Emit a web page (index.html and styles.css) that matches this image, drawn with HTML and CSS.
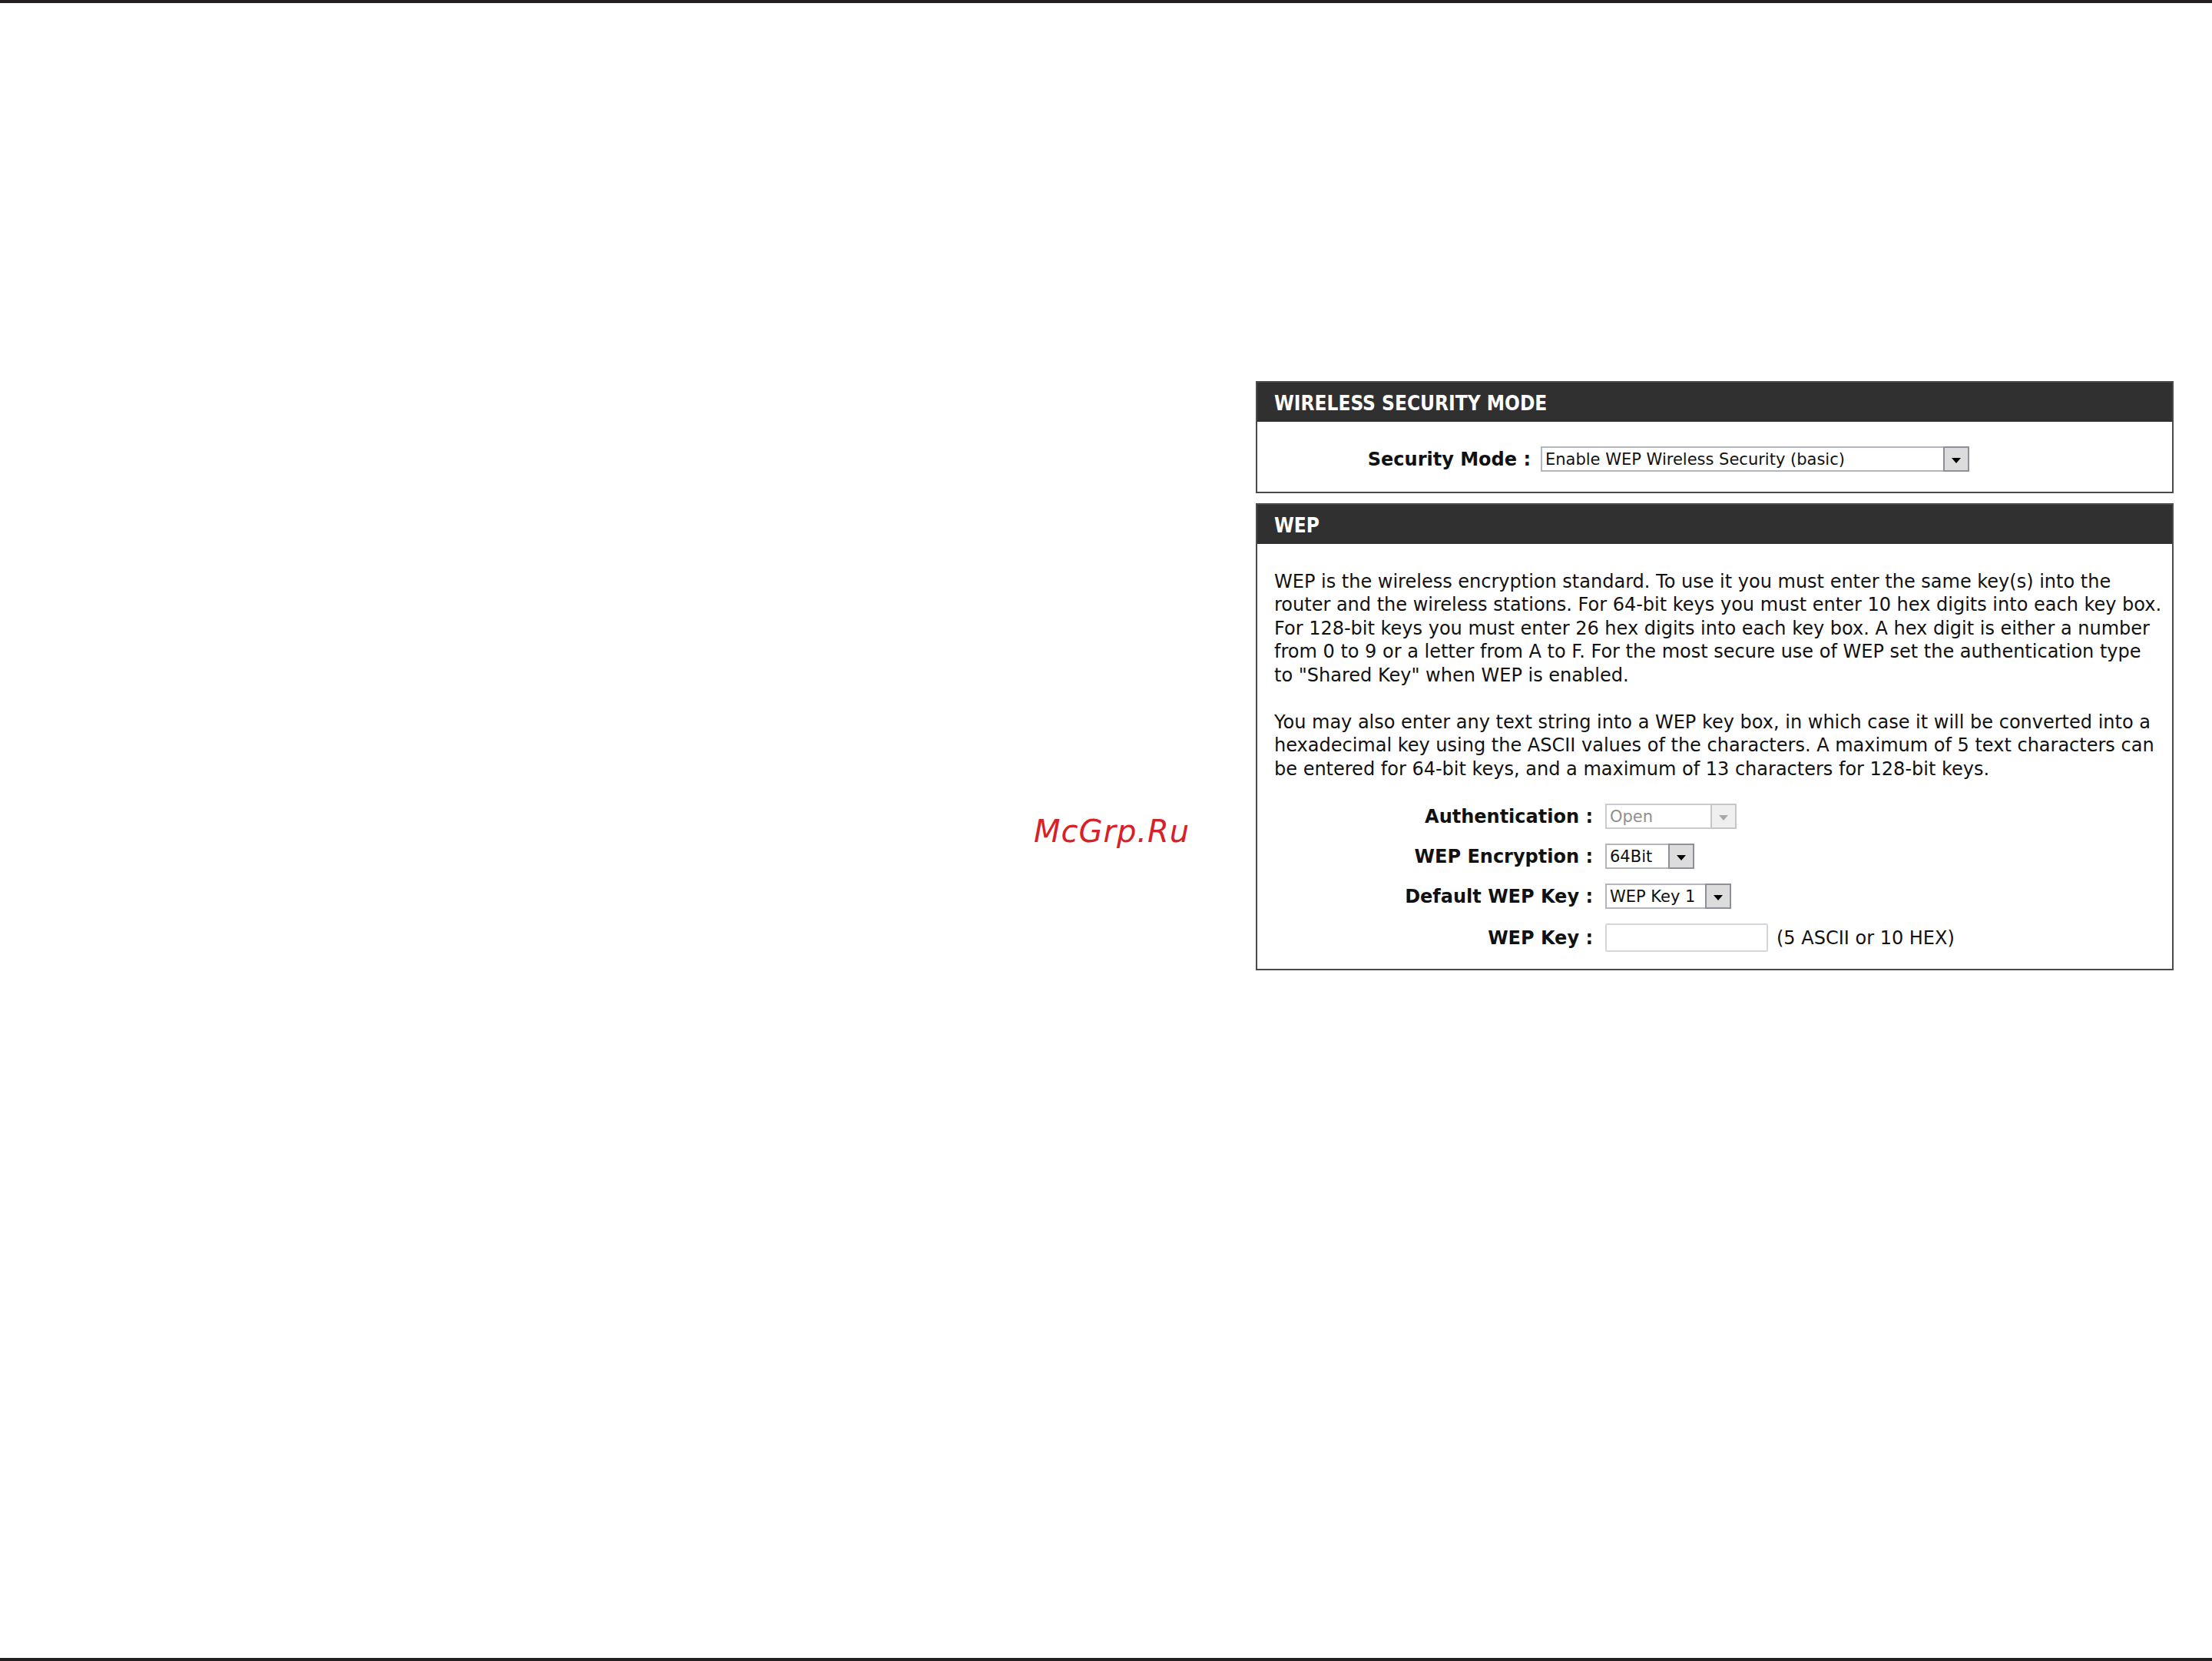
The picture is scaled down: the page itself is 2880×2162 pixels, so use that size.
FILE: index.html
```html
<!DOCTYPE html>
<html lang="en">
<head>
<meta charset="utf-8">
<title>Wireless Security</title>
<link rel="stylesheet" href="styles.css">
</head>
<body>
<div class="page">
  <div class="rule"></div>

  <main class="content">
    <section class="panel">
      <h2 class="panel-head">WIRELESS SECURITY MODE</h2>
      <div class="panel-body mode-body">
        <label class="field-label">Security Mode :</label>
        <div class="select select-mode">
          <span class="select-value">Enable WEP Wireless Security (basic)</span>
          <span class="select-btn"><span class="tri"></span></span>
        </div>
      </div>
    </section>

    <section class="panel">
      <h2 class="panel-head">WEP</h2>
      <div class="panel-body wep-body">
        <p class="intro">WEP is the wireless encryption standard. To use it you must enter the same key(s) into the<br>router and the wireless stations. For 64-bit keys you must enter 10 hex digits into each key box.<br>For 128-bit keys you must enter 26 hex digits into each key box. A hex digit is either a number<br>from 0 to 9 or a letter from A to F. For the most secure use of WEP set the authentication type<br>to "Shared Key" when WEP is enabled.</p>
        <p class="intro">You may also enter any text string into a WEP key box, in which case it will be converted into a<br>hexadecimal key using the ASCII values of the characters. A maximum of 5 text characters can<br>be entered for 64-bit keys, and a maximum of 13 characters for 128-bit keys.</p>

        <div class="wep-form">
          <label class="field-label">Authentication :</label>
          <div class="select select-auth is-disabled">
            <span class="select-value">Open</span>
            <span class="select-btn"><span class="tri"></span></span>
          </div>

          <label class="field-label">WEP Encryption :</label>
          <div class="select select-enc">
            <span class="select-value">64Bit</span>
            <span class="select-btn"><span class="tri"></span></span>
          </div>

          <label class="field-label">Default WEP Key :</label>
          <div class="select select-key">
            <span class="select-value">WEP Key 1</span>
            <span class="select-btn"><span class="tri"></span></span>
          </div>

          <label class="field-label key-label">WEP Key :</label>
          <div class="key-row">
            <span class="text-input"></span>
            <span class="hint">(5 ASCII or 10 HEX)</span>
          </div>
        </div>
      </div>
    </section>
  </main>

  <div class="watermark">McGrp.Ru</div>

  <div class="rule"></div>
</div>
</body>
</html>
```
FILE: styles.css
```css
html, body {
  margin: 0;
  padding: 0;
  background: #ffffff;
}

.page {
  position: relative;
  min-height: 2162px;
  display: flex;
  flex-direction: column;
  font-family: "DejaVu Sans", "Verdana", sans-serif;
  color: #111111;
}

.rule {
  height: 4px;
  background: #231f20;
  flex: none;
}

.content {
  flex: 1;
  display: flex;
  flex-direction: column;
  align-items: flex-end;
  gap: 13px;
  padding: 492px 50px 0 0;
}

/* boxed settings panel with dark caption bar */
.panel {
  width: 1195px;
  box-sizing: border-box;
  border: 2px solid #4a4a4a;
  background: #ffffff;
}

.panel-head {
  margin: 0;
  height: 51px;
  display: flex;
  align-items: center;
  padding: 2px 22px 0;
  box-sizing: border-box;
  background: #303030;
  color: #ffffff;
  font-family: "DejaVu Sans Condensed", "DejaVu Sans", sans-serif;
  font-stretch: condensed;
  font-size: 26px;
  font-weight: bold;
}

.panel-body {
  padding: 0 22px;
}

.field-label {
  font-size: 24px;
  font-weight: bold;
  text-align: right;
  white-space: nowrap;
  color: #111111;
}

.mode-body {
  box-sizing: border-box;
  height: 91px;
  padding-top: 6px;
  display: grid;
  grid-template-columns: 334px auto;
  column-gap: 13px;
  align-items: center;
  justify-content: start;
}

.wep-body {
  padding-top: 34px;
  padding-bottom: 22px;
}

.intro {
  margin: 0 0 31px 0;
  font-size: 24px;
  line-height: 30.4px;
  white-space: nowrap;
}

.intro + .intro {
  margin-bottom: 30px;
}

.wep-form {
  display: grid;
  grid-template-columns: 415px auto;
  grid-template-rows: 33px 33px 33px 37px;
  column-gap: 16px;
  row-gap: 19px;
  align-items: center;
  justify-content: start;
}

/* drop-down lists */
.select {
  box-sizing: border-box;
  height: 33px;
  display: flex;
  align-items: stretch;
  border: 2px solid #b3b7bd;
  background: #ffffff;
  font-size: 21px;
  color: #111111;
}

.select-value {
  flex: 1;
  display: flex;
  align-items: center;
  padding-left: 4px;
  white-space: nowrap;
  overflow: hidden;
}

.select-btn {
  box-sizing: border-box;
  width: 34px;
  flex: none;
  display: flex;
  align-items: center;
  justify-content: center;
  border: 2px solid #8d9096;
  background: #dcdcdc;
  margin: -2px -2px -2px 0;
}

.tri {
  width: 0;
  height: 0;
  border-left: 6px solid transparent;
  border-right: 6px solid transparent;
  border-top: 7px solid #000000;
  margin-top: 3px;
}

.select-mode { width: 558px; }
.select-auth { width: 171px; }
.select-enc  { width: 116px; }
.select-key  { width: 164px; }

.is-disabled {
  border-color: #c9ccd0;
  color: #8f8f8f;
}

.is-disabled .select-btn {
  border-color: #c4c6c9;
  background: #efefef;
}

.is-disabled .tri {
  border-top-color: #a8a8a8;
}

.key-row {
  display: flex;
  align-items: center;
  gap: 11px;
}

.text-input {
  box-sizing: border-box;
  width: 212px;
  height: 37px;
  border: 2px solid #d3d6da;
  border-radius: 2px;
  background: #ffffff;
}

.hint {
  font-size: 24px;
  white-space: nowrap;
}

.watermark {
  position: absolute;
  left: 1346px;
  top: 1059px;
  font-family: "DejaVu Sans", sans-serif;
  font-style: italic;
  font-size: 40px;
  letter-spacing: 1px;
  color: #d72027;
}
```
